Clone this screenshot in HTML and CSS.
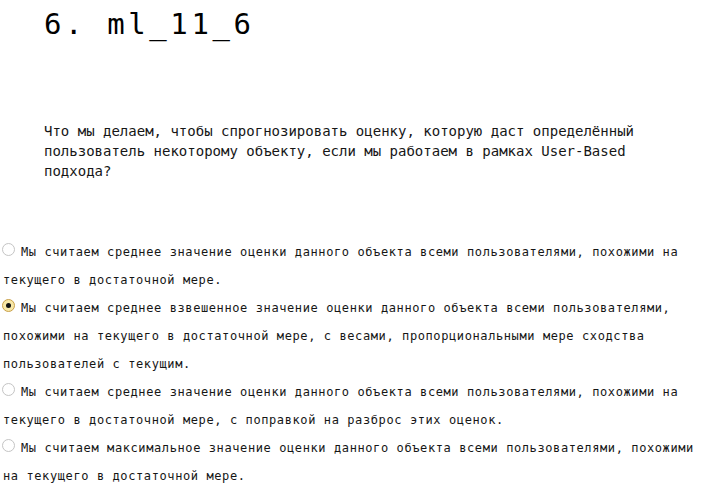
FILE: index.html
```html
<!DOCTYPE html>
<html lang="ru">
<head>
<meta charset="utf-8">
<title>ml_11_6</title>
<link rel="stylesheet" href="styles.css">
</head>
<body>
<h1 class="title">6. ml_11_6</h1>
<p class="question">Что мы делаем, чтобы спрогнозировать оценку, которую даст определённый пользователь некоторому объекту, если мы работаем в рамках User-Based подхода?</p>
<form class="options">
<label class="option"><input class="radio" type="radio" name="q6">Мы считаем среднее значение оценки данного объекта всеми пользователями, похожими на текущего в достаточной мере.</label>
<label class="option"><input class="radio" type="radio" name="q6" checked>Мы считаем среднее взвешенное значение оценки данного объекта всеми пользователями, похожими на текущего в достаточной мере, с весами, пропорциональными мере сходства пользователей с текущим.</label>
<label class="option"><input class="radio" type="radio" name="q6">Мы считаем среднее значение оценки данного объекта всеми пользователями, похожими на текущего в достаточной мере, с поправкой на разброс этих оценок.</label>
<label class="option"><input class="radio" type="radio" name="q6">Мы считаем максимальное значение оценки данного объекта всеми пользователями, похожими на текущего в достаточной мере.</label>
</form>
</body>
</html>
```
FILE: styles.css
```css
html, body {
  margin: 0;
  padding: 0;
  background: #ffffff;
}

body {
  font-family: "DejaVu Sans Mono", "Liberation Mono", monospace;
  color: #161616;
}

.title {
  margin: 0;
  padding: 6px 0 0 44px;
  font-size: 29px;
  line-height: 36px;
  font-weight: normal;
  letter-spacing: 3.6px;
  color: #000000;
}

.question {
  margin: 79px 0 0 0;
  padding: 0 44px;
  font-size: 14px;
  line-height: 20px;
}

.options {
  margin: 57px 0 0 0;
  padding: 0 0 0 3px;
  font-size: 12px;
  line-height: 28px;
  letter-spacing: 0.6px;
}

.option {
  display: block;
  cursor: pointer;
}

.radio {
  -webkit-appearance: none;
  appearance: none;
  box-sizing: border-box;
  width: 13px;
  height: 13px;
  margin: 0 6px 0 -1px;
  border: 1px solid #c4c4c4;
  border-radius: 50%;
  background: #ffffff;
  vertical-align: baseline;
  display: inline-block;
  position: relative;
}

.radio:checked {
  border-color: #c9a04a;
  background: #f7e7a6;
}

.radio:checked::after {
  content: "";
  position: absolute;
  left: 3px;
  top: 3px;
  width: 5px;
  height: 5px;
  border-radius: 50%;
  background: #111111;
}
```
